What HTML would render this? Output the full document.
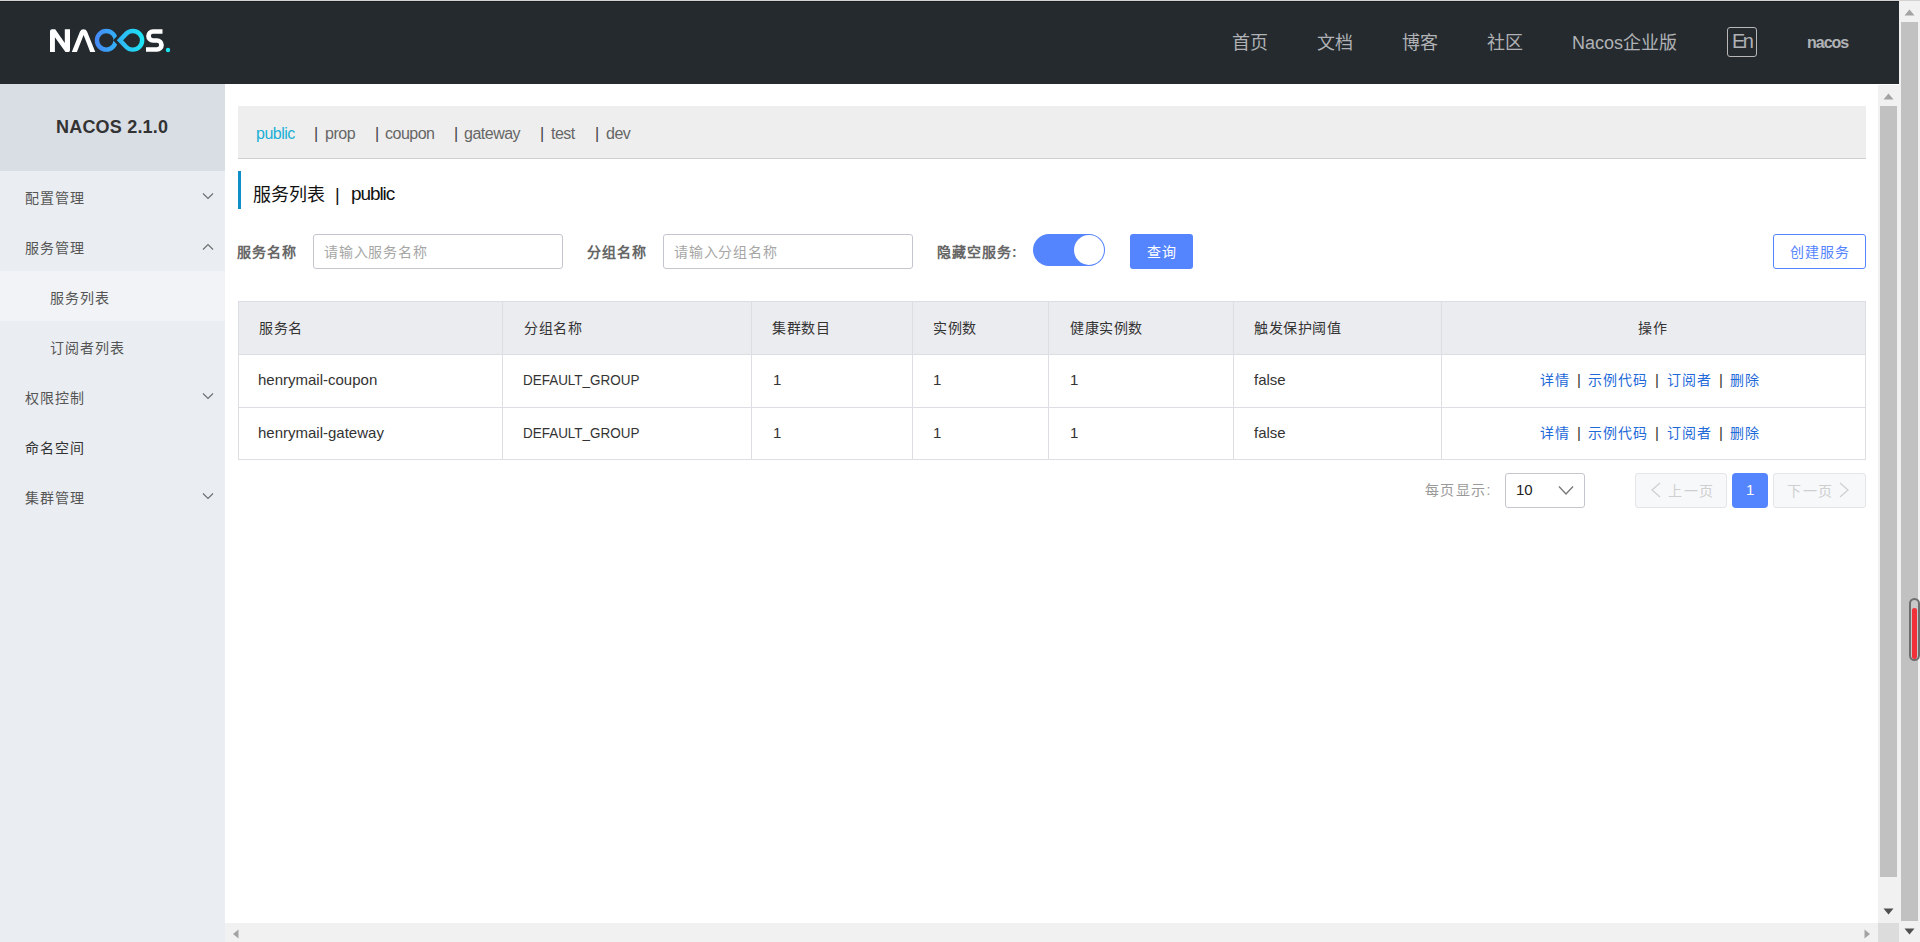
<!DOCTYPE html>
<html lang="zh-CN"><head><meta charset="utf-8">
<style>
*{box-sizing:border-box;margin:0;padding:0}
html,body{width:1920px;height:942px;overflow:hidden;background:#fff;font-family:"Liberation Sans",sans-serif;color:#333}
.a{position:absolute;white-space:nowrap;line-height:20px}
.nav{font-size:18px;color:#b0b2b5;top:33px}
.mi{font-size:14px;letter-spacing:1px;color:#555}
.chev{left:202px;width:12px;height:8px}
.tab{top:124px;font-size:16px;letter-spacing:-0.5px;color:#666}
.bar{top:124px;font-size:16px;color:#444}
.lbl{top:242px;font-size:14px;letter-spacing:1px;font-weight:bold;color:#666}
.inp{top:234px;width:250px;height:35px;border:1px solid #c4c6cf;border-radius:3px;background:#fff}
.ph{top:242px;font-size:14px;letter-spacing:0.8px;color:#a6a6a6}
.hline{height:1px;background:#dcdee3}
.vline{width:1px;background:#dcdee3;top:301px;height:159px}
.th{top:318px;font-size:14px;letter-spacing:0.6px;color:#333}
.td{font-size:15px;color:#333}
.cj{font-size:14px;letter-spacing:1px}
.lk{font-size:14px;letter-spacing:1px;color:#1f6ad8}
.sep{font-size:15px;color:#333}
.pg{top:473px;height:35px;border:1px solid #e4e5e9;background:#f7f8fa;border-radius:3px}
.pgt{top:480.5px;font-size:14px;letter-spacing:1.5px;color:#cfcfcf}
.sbtrack{background:#f1f1f1}
.thumb{background:#c1c1c1}
</style></head><body>

<div class="a" style="left:0;top:1px;width:1899px;height:83px;background:#252a2f;border-top:1px solid #1c1f22"></div>
<svg class="a" style="left:48px;top:26px" width="126" height="30" viewBox="48 26 126 30">
  <defs><linearGradient id="lg" x1="95" y1="0" x2="144" y2="0" gradientUnits="userSpaceOnUse"><stop offset="0" stop-color="#4787f6"/><stop offset="0.5" stop-color="#2fb7f6"/><stop offset="1" stop-color="#1ce6f4"/></linearGradient></defs>
  <path d="M50 52L50 31A2 2 0 0 1 52 29.3L55.2 29.3L64.8 43L64.8 29.3L70 29.3L70 50A2 2 0 0 1 67.5 52L65.5 52L54.9 37.3L54.9 52Z" fill="#fff"/>
  <path d="M71.8 52L80 31.5Q81 29.3 83.5 29.3Q86 29.3 87 31.5L95.3 52L90.2 52L83.6 35L76.9 52Z" fill="#fff"/>
  <path d="M117.85 40.3A11.55 11.55 0 1 1 94.75 40.3A11.55 11.55 0 1 1 117.85 40.3ZM113.4 40.3A7.1 7.1 0 1 0 99.2 40.3A7.1 7.1 0 1 0 113.4 40.3Z" fill="url(#lg)" fill-rule="evenodd"/>
  <path d="M113 40.3L125 27.8L125 52.8Z" fill="#252a2f"/>
  <path d="M116.8 40.3L124.46 32.31A11.55 11.55 0 1 1 124.46 48.29ZM123.1 40.3L127.6 35.47A7.1 7.1 0 1 1 127.6 45.13Z" fill="url(#lg)" fill-rule="evenodd"/>
  <path d="M162.5 31.5H153A4.5 4.5 0 0 0 153 40.5H157A4.5 4.5 0 0 1 157 49.5H146" fill="none" stroke="#fff" stroke-width="4.7"/>
  <circle cx="168" cy="50" r="2.2" fill="#1ce6f4"/>
</svg>
<div class="a nav" style="left:1232px">首页</div>
<div class="a nav" style="left:1317px">文档</div>
<div class="a nav" style="left:1402px">博客</div>
<div class="a nav" style="left:1487px">社区</div>
<div class="a nav" style="left:1572px">Nacos企业版</div>
<div class="a" style="left:1727px;top:27px;width:30px;height:30px;border:1px solid #b8b8b8;border-radius:3px"></div>
<div class="a" style="left:1732px;top:31px;font-size:20px;letter-spacing:-2.5px;color:#b0b2b5">En</div>
<div class="a" style="left:1807px;top:33px;font-size:16px;font-weight:bold;letter-spacing:-1px;color:#b0b2b5">nacos</div>

<div class="a" style="left:0;top:84px;width:225px;height:858px;background:#eaedf1"></div>
<div class="a" style="left:0;top:84px;width:225px;height:87px;background:#d9dde4"></div>
<div class="a" style="left:56px;top:117px;font-size:18px;font-weight:bold;letter-spacing:0.2px;color:#333">NACOS 2.1.0</div>
<div class="a" style="left:0;top:271px;width:225px;height:50px;background:#f1f3f7"></div>
<div class="a mi" style="left:25px;top:188px">配置管理</div>
<div class="a mi" style="left:25px;top:238px">服务管理</div>
<div class="a mi" style="left:50px;top:288px">服务列表</div>
<div class="a mi" style="left:50px;top:338px">订阅者列表</div>
<div class="a mi" style="left:25px;top:388px">权限控制</div>
<div class="a mi" style="left:25px;top:438px;color:#333">命名空间</div>
<div class="a mi" style="left:25px;top:488px">集群管理</div>
<svg class="a chev" style="top:192px" viewBox="0 0 12 8"><path d="M1 1.5L6 6.5L11 1.5" fill="none" stroke="#707070" stroke-width="1.2"/></svg>
<svg class="a chev" style="top:243px" viewBox="0 0 12 8"><path d="M1 6.5L6 1.5L11 6.5" fill="none" stroke="#707070" stroke-width="1.2"/></svg>
<svg class="a chev" style="top:392px" viewBox="0 0 12 8"><path d="M1 1.5L6 6.5L11 1.5" fill="none" stroke="#707070" stroke-width="1.2"/></svg>
<svg class="a chev" style="top:492px" viewBox="0 0 12 8"><path d="M1 1.5L6 6.5L11 1.5" fill="none" stroke="#707070" stroke-width="1.2"/></svg>

<div class="a" style="left:238px;top:106px;width:1628px;height:53px;background:#eee;border-bottom:1px solid #cfcfcf"></div>
<div class="a tab" style="left:256px;color:#1ab0d6">public</div>
<div class="a bar" style="left:314px">|</div><div class="a tab" style="left:325px">prop</div>
<div class="a bar" style="left:375px">|</div><div class="a tab" style="left:385px">coupon</div>
<div class="a bar" style="left:454px">|</div><div class="a tab" style="left:464px">gateway</div>
<div class="a bar" style="left:540px">|</div><div class="a tab" style="left:551px">test</div>
<div class="a bar" style="left:595px">|</div><div class="a tab" style="left:606px">dev</div>

<div class="a" style="left:238px;top:171px;width:3px;height:38px;background:#0f8fc7"></div>
<div class="a" style="left:253px;top:185px;font-size:18px;color:#111">服务列表</div>
<div class="a" style="left:335px;top:185px;font-size:18px;color:#111">|</div>
<div class="a" style="left:351px;top:184px;font-size:19px;letter-spacing:-1.1px;color:#111">public</div>

<div class="a lbl" style="left:237px">服务名称</div>
<div class="a inp" style="left:313px"></div>
<div class="a ph" style="left:324px">请输入服务名称</div>
<div class="a lbl" style="left:587px">分组名称</div>
<div class="a inp" style="left:663px"></div>
<div class="a ph" style="left:674px">请输入分组名称</div>
<div class="a lbl" style="left:937px">隐藏空服务:</div>
<div class="a" style="left:1033px;top:234px;width:72px;height:32px;border-radius:16px;background:#5584ff"></div>
<div class="a" style="left:1074px;top:235px;width:30px;height:30px;border-radius:15px;background:#fff"></div>
<div class="a" style="left:1130px;top:234px;width:63px;height:35px;background:#5584ff;border-radius:3px"></div>
<div class="a cj" style="left:1147px;top:242px;color:#fff">查询</div>
<div class="a" style="left:1773px;top:234px;width:93px;height:35px;border:1px solid #5584ff;border-radius:3px"></div>
<div class="a cj" style="left:1790px;top:242px;color:#5584ff">创建服务</div>

<div class="a" style="left:238px;top:301px;width:1628px;height:159px;border:1px solid #dcdee3"></div>
<div class="a" style="left:239px;top:302px;width:1626px;height:52px;background:#ebecf0"></div>
<div class="a hline" style="left:238px;top:354px;width:1628px"></div>
<div class="a hline" style="left:238px;top:407px;width:1628px"></div>
<div class="a vline" style="left:502px"></div>
<div class="a vline" style="left:751px"></div>
<div class="a vline" style="left:912px"></div>
<div class="a vline" style="left:1048px"></div>
<div class="a vline" style="left:1233px"></div>
<div class="a vline" style="left:1441px"></div>
<div class="a th" style="left:259px">服务名</div>
<div class="a th" style="left:524px">分组名称</div>
<div class="a th" style="left:772px">集群数目</div>
<div class="a th" style="left:933px">实例数</div>
<div class="a th" style="left:1070px">健康实例数</div>
<div class="a th" style="left:1254px">触发保护阈值</div>
<div class="a th" style="left:1638px">操作</div>
<div class="a td" style="left:258px;top:370px">henrymail-coupon</div>
<div class="a td" style="left:523px;top:370px;transform:scaleX(0.897);transform-origin:0 0">DEFAULT_GROUP</div>
<div class="a td" style="left:773px;top:370px">1</div>
<div class="a td" style="left:933px;top:370px">1</div>
<div class="a td" style="left:1070px;top:370px">1</div>
<div class="a td" style="left:1254px;top:370px">false</div>
<div class="a lk" style="left:1540px;top:370px">详情</div>
<div class="a sep" style="left:1577px;top:370px">|</div>
<div class="a lk" style="left:1588px;top:370px">示例代码</div>
<div class="a sep" style="left:1655px;top:370px">|</div>
<div class="a lk" style="left:1667px;top:370px">订阅者</div>
<div class="a sep" style="left:1719px;top:370px">|</div>
<div class="a lk" style="left:1730px;top:370px">删除</div>
<div class="a td" style="left:258px;top:423px">henrymail-gateway</div>
<div class="a td" style="left:523px;top:423px;transform:scaleX(0.897);transform-origin:0 0">DEFAULT_GROUP</div>
<div class="a td" style="left:773px;top:423px">1</div>
<div class="a td" style="left:933px;top:423px">1</div>
<div class="a td" style="left:1070px;top:423px">1</div>
<div class="a td" style="left:1254px;top:423px">false</div>
<div class="a lk" style="left:1540px;top:423px">详情</div>
<div class="a sep" style="left:1577px;top:423px">|</div>
<div class="a lk" style="left:1588px;top:423px">示例代码</div>
<div class="a sep" style="left:1655px;top:423px">|</div>
<div class="a lk" style="left:1667px;top:423px">订阅者</div>
<div class="a sep" style="left:1719px;top:423px">|</div>
<div class="a lk" style="left:1730px;top:423px">删除</div>

<div class="a cj" style="left:1425px;top:480px;color:#999;letter-spacing:1.4px">每页显示:</div>
<div class="a" style="left:1505px;top:473px;width:80px;height:35px;border:1px solid #c4c6cf;border-radius:3px;background:#fff"></div>
<div class="a" style="left:1516px;top:480px;font-size:15px;color:#222">10</div>
<svg class="a" style="left:1558px;top:485px" width="16" height="11" viewBox="0 0 16 11"><path d="M1 1.5L8 9L15 1.5" fill="none" stroke="#777" stroke-width="1.3"/></svg>
<div class="a pg" style="left:1635px;width:92px"></div>
<svg class="a" style="left:1650px;top:482px" width="12" height="16" viewBox="0 0 12 16"><path d="M10 1L2 8L10 15" fill="none" stroke="#d0d0d0" stroke-width="1.3"/></svg>
<div class="a pgt" style="left:1668px">上一页</div>
<div class="a" style="left:1732px;top:473px;width:36px;height:35px;background:#5584ff;border-radius:4px"></div>
<div class="a" style="left:1746px;top:480px;font-size:15px;color:#fff">1</div>
<div class="a pg" style="left:1773px;width:93px"></div>
<div class="a pgt" style="left:1787px">下一页</div>
<svg class="a" style="left:1838px;top:482px" width="12" height="16" viewBox="0 0 12 16"><path d="M2 1L10 8L2 15" fill="none" stroke="#d0d0d0" stroke-width="1.3"/></svg>

<div class="a sbtrack" style="left:1878px;top:85px;width:21px;height:838px"></div>
<div class="a thumb" style="left:1880px;top:106px;width:17px;height:771px"></div>
<svg class="a" style="left:1883px;top:93px" width="11" height="7" viewBox="0 0 11 7"><path d="M5.5 0.5L10.5 6.5H0.5Z" fill="#a3a3a3"/></svg>
<svg class="a" style="left:1883px;top:908px" width="11" height="7" viewBox="0 0 11 7"><path d="M0.5 0.5H10.5L5.5 6.5Z" fill="#505050"/></svg>
<div class="a sbtrack" style="left:225px;top:923px;width:1653px;height:19px"></div>
<svg class="a" style="left:232px;top:929px" width="7" height="10" viewBox="0 0 7 10"><path d="M6.5 0.5V9.5L1 5Z" fill="#a3a3a3"/></svg>
<svg class="a" style="left:1864px;top:929px" width="7" height="10" viewBox="0 0 7 10"><path d="M0.5 0.5V9.5L6 5Z" fill="#a3a3a3"/></svg>
<div class="a" style="left:1878px;top:923px;width:21px;height:19px;background:#dcdcdc"></div>
<div class="a sbtrack" style="left:1899px;top:0;width:21px;height:942px"></div>
<div class="a" style="left:0;top:0;width:1920px;height:1px;background:#d4d3d1"></div>
<div class="a thumb" style="left:1901px;top:22px;width:17px;height:899px"></div>
<svg class="a" style="left:1904px;top:9px" width="11" height="7" viewBox="0 0 11 7"><path d="M5.5 0.5L10.5 6.5H0.5Z" fill="#a3a3a3"/></svg>
<svg class="a" style="left:1904px;top:928px" width="11" height="7" viewBox="0 0 11 7"><path d="M0.5 0.5H10.5L5.5 6.5Z" fill="#505050"/></svg>
<div class="a" style="left:1909px;top:598px;width:11px;height:63px;border:2px solid #6e6e6e;border-radius:6px;background:#c8c8c8"></div>
<div class="a" style="left:1912.3px;top:607.5px;width:4.5px;height:51px;border-radius:2.25px;background:#f0313a"></div>
</body></html>
